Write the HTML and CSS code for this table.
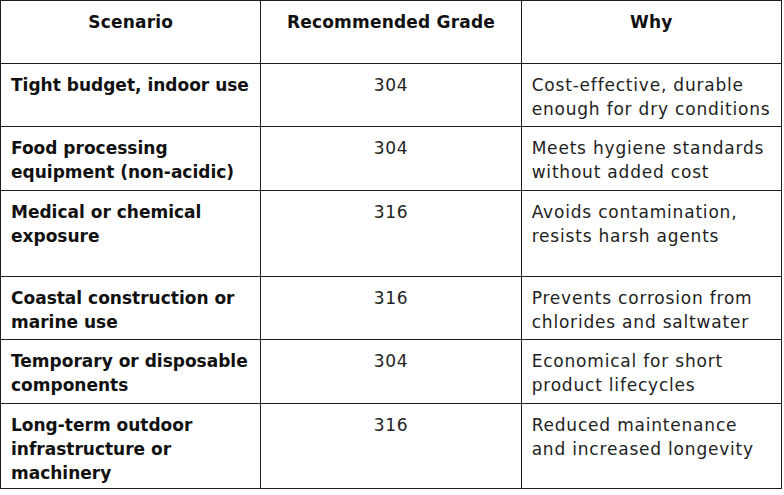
FILE: index.html
```html
<!DOCTYPE html>
<html lang="en">
<head>
<meta charset="utf-8">
<title>Stainless steel grade guide</title>
<link rel="stylesheet" href="styles.css">
</head>
<body>
<table class="grade-table">
  <thead>
    <tr class="row-63">
      <th>Scenario</th>
      <th>Recommended Grade</th>
      <th>Why</th>
    </tr>
  </thead>
  <tbody>
    <tr class="row-63">
      <td class="scenario">Tight budget, indoor use</td>
      <td class="grade">304</td>
      <td class="why">Cost-effective, durable<br>enough for dry conditions</td>
    </tr>
    <tr class="row-64">
      <td class="scenario">Food processing<br>equipment (non-acidic)</td>
      <td class="grade">304</td>
      <td class="why">Meets hygiene standards<br>without added cost</td>
    </tr>
    <tr class="row-86">
      <td class="scenario">Medical or chemical<br>exposure</td>
      <td class="grade">316</td>
      <td class="why">Avoids contamination,<br>resists harsh agents</td>
    </tr>
    <tr class="row-63">
      <td class="scenario">Coastal construction or<br>marine use</td>
      <td class="grade">316</td>
      <td class="why">Prevents corrosion from<br>chlorides and saltwater</td>
    </tr>
    <tr class="row-64">
      <td class="scenario">Temporary or disposable<br>components</td>
      <td class="grade">304</td>
      <td class="why">Economical for short<br>product lifecycles</td>
    </tr>
    <tr class="row-85">
      <td class="scenario">Long-term outdoor<br>infrastructure or<br>machinery</td>
      <td class="grade">316</td>
      <td class="why">Reduced maintenance<br>and increased longevity</td>
    </tr>
  </tbody>
</table>
</body>
</html>
```
FILE: styles.css
```css
html, body {
  margin: 0;
  padding: 0;
  background: #ffffff;
}

body {
  font-family: "DejaVu Sans", "Liberation Sans", sans-serif;
  font-size: 17px;
  line-height: 24px;
  color: #222222;
}

.grade-table {
  border-collapse: collapse;
  width: 782px;
  table-layout: fixed;
}

.grade-table th,
.grade-table td {
  border: 1px solid #1e1e1e;
  padding: 9px 10px 0 10px;
  vertical-align: top;
  white-space: nowrap;
  width: 260px;
  box-sizing: border-box;
}

.grade-table th {
  font-weight: bold;
  color: #111111;
  text-align: center;
  letter-spacing: 0.2px;
}

.row-63 { height: 63px; }
.row-64 { height: 64px; }
.row-85 { height: 85px; }
.row-86 { height: 86px; }

.scenario {
  font-weight: bold;
  color: #111111;
  letter-spacing: 0;
}

.grade {
  text-align: center;
  letter-spacing: 0.6px;
}

.why {
  letter-spacing: 0.8px;
}
```
